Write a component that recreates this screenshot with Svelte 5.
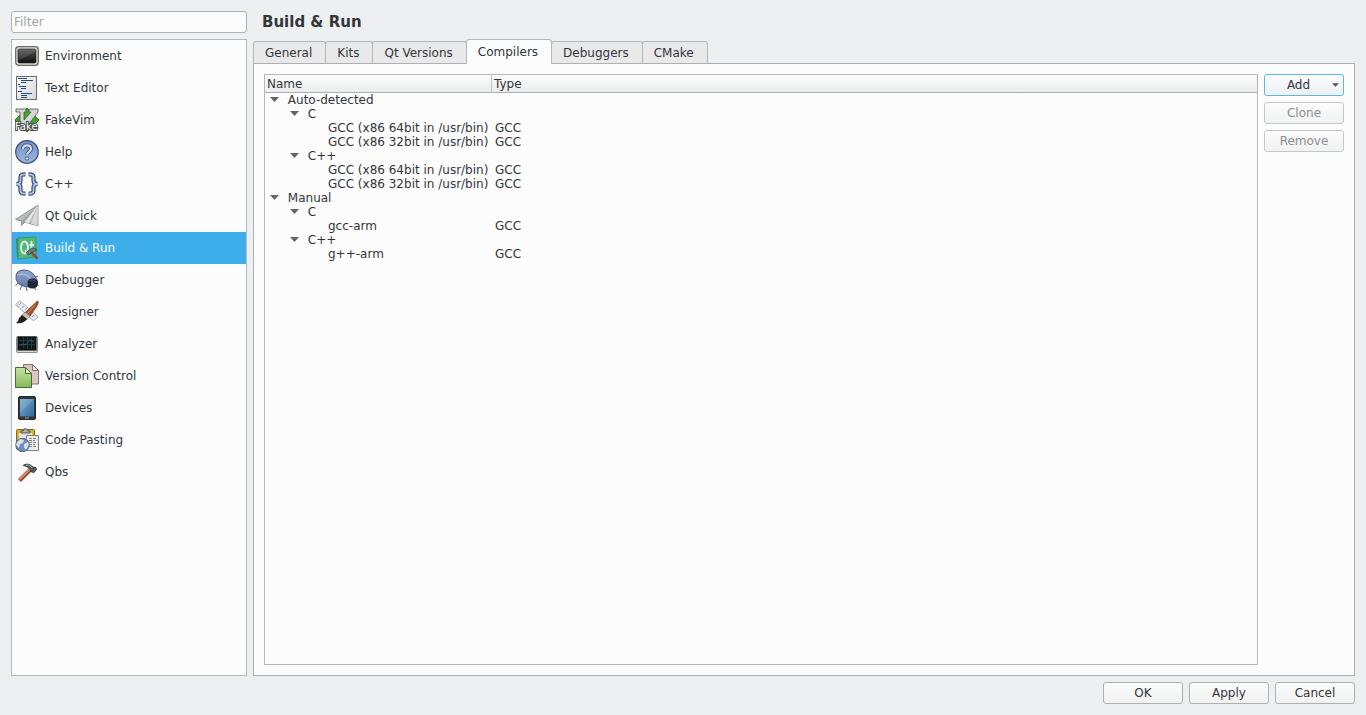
<script>
    const categories = [
        "Environment", "Text Editor", "FakeVim", "Help", "C++", "Qt Quick", "Build & Run",
        "Debugger", "Designer", "Analyzer", "Version Control", "Devices", "Code Pasting", "Qbs"
    ]
    const tabs = ["General", "Kits", "Qt Versions", "Compilers", "Debuggers", "CMake"]
    const rows = [
        { level: 0, name: "Auto-detected" },
        { level: 1, name: "C" },
        { level: 2, name: "GCC (x86 64bit in /usr/bin)", type: "GCC" },
        { level: 2, name: "GCC (x86 32bit in /usr/bin)", type: "GCC" },
        { level: 1, name: "C++" },
        { level: 2, name: "GCC (x86 64bit in /usr/bin)", type: "GCC" },
        { level: 2, name: "GCC (x86 32bit in /usr/bin)", type: "GCC" },
        { level: 0, name: "Manual" },
        { level: 1, name: "C" },
        { level: 2, name: "gcc-arm", type: "GCC" },
        { level: 1, name: "C++" },
        { level: 2, name: "g++-arm", type: "GCC" }
    ]

    let filter = $state ("")
    let category = $state ("Build & Run")
    let tab = $state ("Compilers")
    let closed = $state ([])

    const shown = $derived (categories.filter (c => c.toLowerCase ().includes (filter.toLowerCase ())))

    // a row is visible when none of its parents is closed
    function isVisible (index) {
        let level = rows[index].level
        for (let i = index - 1; i >= 0 && level > 0; i--) {
            if (rows[i].level < level) {
                if (closed.includes (i)) return false
                level = rows[i].level
            }
        }
        return true
    }

    function toggle (index) {
        closed = closed.includes (index) ? closed.filter (i => i !== index) : [...closed, index]
    }
</script>

{#snippet icon(name)}
    <svg class="icon" viewBox="0 0 24 24" aria-hidden="true">
        {#if name === "Environment"}
            <rect x=".7" y="2.7" width="22.6" height="18.6" rx="3" fill="#d8d8d6" stroke="#686b69" stroke-width="1.3" />
            <rect x="3" y="5" width="18" height="14" rx="1.5" fill="url(#screen)" stroke="#222" stroke-width=".6" />
            <path d="M3.5 16Q12 13 20.5 7V5.500H4z" fill="#fff" opacity=".12" />
        {:else if name === "Text Editor"}
            <rect x="1.500" y=".5" width="20" height="23" fill="url(#paper)" stroke="#686b69" />
            <path d="M3 2.500h9M6 4.500h12M6 6.500h5M3 8.500h2M4 10.500h7M6 12.500h5M3 15.500h4M6 17.500h11M6 19.500h6M6 21.500h6" stroke="#24468c" stroke-width="1.200" />
        {:else if name === "FakeVim"}
            <path d="M12 0l12 12-12 12L0 12z" fill="#3eaa22" stroke="#23751b" />
            <path d="M1 1h10v3H9v8l7-8h-2V1h9v3L11 20H5V4H1z" fill="#d6d8d6" stroke="#4b4e4b" stroke-width=".8" />
            <text x="0" y="22" class="fake">Fake</text>
        {:else if name === "Help"}
            <circle cx="12" cy="12" r="11.300" fill="url(#blue)" stroke="#405276" stroke-width="1.2" />
            <path d="M8 9Q8 5.300 12 5.300t4 3.500c0 3-4 3-4 6" fill="none" stroke="#33466f" stroke-width="3.800" />
            <path d="M8 9Q8 5.300 12 5.300t4 3.500c0 3-4 3-4 6" fill="none" stroke="#d3def2" stroke-width="2.200" />
            <circle cx="12" cy="18.500" r="1.700" fill="#d3def2" stroke="#33466f" stroke-width=".8" />
        {:else if name === "C++"}
            <path d="M10.500 2.500Q5.500 2 5.500 5v3.500Q5.500 12 1.500 12q4 0 4 3.500V19q0 3 5 2.500M13.500 2.500q5-.5 5 2.500v3.500q0 3.500 4 3.500-4 0-4 3.500V19q0 3-5 2.500" fill="none" stroke="#2f4877" stroke-width="4.200" />
            <path d="M10.500 2.500Q5.500 2 5.500 5v3.500Q5.500 12 1.500 12q4 0 4 3.500V19q0 3 5 2.500M13.500 2.500q5-.5 5 2.500v3.500q0 3.500 4 3.500-4 0-4 3.500V19q0 3-5 2.500" fill="none" stroke="#b5c5e2" stroke-width="1.800" />
        {:else if name === "Qt Quick"}
            <path d="M23 1L.5 15.500l6 1.500v4.500l3.500-3.500 8 2.500L23 21.500z" fill="#bcbebe" stroke="#7d8080" stroke-width=".8" />
            <path d="M23 1L6.500 17v4.500z" fill="#a2a4a4" />
            <path d="M23 1L10 18l3.500 1.300z" fill="#e7e7e7" />
            <path d="M23 1l-7 19 6.500 1.200z" fill="#d7d9d9" />
        {:else if name === "Build & Run"}
            <path d="M1 3l4-2v20l-3 2z" fill="#338c5e" />
            <path d="M3 2l18-1v20L3 23z" fill="#51b875" stroke="#3a996a" />
            <ellipse cx="9.500" cy="11.500" rx="3.500" ry="6" fill="none" stroke="#dcefe4" stroke-width="2" />
            <path d="M10 14l3 4.500M16.500 5v9q0 2 2 2M14.500 9h4.500" fill="none" stroke="#dcefe4" stroke-width="1.800" />
            <path d="M15.500 15.500l7 7" stroke="#84513a" stroke-width="2.800" />
            <path d="M12 18l-.5-2 5.500-4 4 .5.5 2-4.500 1.500-3 3z" fill="#68777b" stroke="#344448" stroke-width=".7" />
        {:else if name === "Debugger"}
            <path d="M3 15l-2.500 3M7 17l-2 5M11 19l1 4M18 18l3 4M21 15l2.500 3M19 10l4-2" stroke="#606268" fill="none" />
            <path d="M1 11Q0 2 9 2t13 10q1 7-7 7-12 0-14-8z" fill="url(#bug)" stroke="#4c5d7e" />
            <path d="M4 7q7-3 13 5" fill="none" stroke="#b5c3dc" stroke-width="1.300" />
            <path d="M12.500 16q0-6 5.500-5.500t5 5q-.5 5-5.500 5t-5-4.500z" fill="#202634" />
            <path d="M14.500 13q3-2.500 6 .5" fill="none" stroke="#566172" stroke-width=".8" />
        {:else if name === "Designer"}
            <path d="M.7 4.500L5 .8l18 16-4.500 4z" fill="#e6eaf2" stroke="#a6acb8" />
            <path d="M4 5l2-2M7 8l2-2M10 10l2-2M14 14l2-2M17 17l2-2" stroke="#929aaa" />
            <path d="M22.500 1q1.500 0 0 4L15 16l-5-3z" fill="#a45427" stroke="#633013" stroke-width=".8" />
            <path d="M20 5l-8 9" stroke="#dc9560" />
            <path d="M10 12l5 4-3.500 4-5-4z" fill="#c6c2ba" stroke="#695d50" stroke-width=".6" />
            <path d="M7 15l5 4q-3 5-11 4 3-2 3-5z" fill="#211c19" />
        {:else if name === "Analyzer"}
            <rect x="1.500" y="4.500" width="21" height="16" rx="1" fill="#c2c4c4" stroke="#8a8d8d" />
            <rect x="3" y="5" width="18" height="13" fill="#101719" stroke="#111" />
            <path d="M4 8.500h16M4 12.500h16M8.500 5v12M12.500 5v12M16.500 5v12" stroke="#21474e" stroke-width=".8" />
            <path d="M4 14l4-2 3 1 4-5 4 2" fill="none" stroke="#2f6b6e" stroke-width=".7" />
            <path d="M3 19.500h15M20 19.500h1" stroke="#d9dbdb" />
        {:else if name === "Version Control"}
            <path d="M8.500.5h9l6 6V20h-15z" fill="#ddc6c7" stroke="#846f70" />
            <path d="M17.500.5v6h6z" fill="#f0e2e2" stroke="#846f70" />
            <path d="M.5 3.500h10l6 6v14H.5z" fill="url(#green)" stroke="#4b6a32" />
            <path d="M10.500 3.500v6h6z" fill="#dceebd" stroke="#4b6a32" />
        {:else if name === "Devices"}
            <rect x="3.500" y=".5" width="17" height="23" rx="1.500" fill="#303538" stroke="#24292b" />
            <rect x="5" y="3" width="14" height="17.500" fill="url(#tablet)" />
            <path d="M5 3h14L5 17z" fill="#fff" opacity=".13" />
            <path d="M10 22h4" stroke="#aaa" />
        {:else if name === "Code Pasting"}
            <rect x="1.500" y="1.500" width="18" height="20" rx="1" fill="#d6b62d" stroke="#7c6924" />
            <rect x="4" y="5" width="13" height="14" fill="#e9e6d9" />
            <path d="M6 5V3h2q2-5 5 0h2v2z" fill="#b1b1b1" stroke="#555" />
            <path d="M11.500 7.500h12v15h-12z" fill="#ededec" stroke="#7e807d" />
            <path d="M14 10.500h7M14 12.500h6M14 14.500h7M14 16.500h6M14 18.500h7" stroke="#858884" stroke-dasharray="3 1" />
            <circle cx="7.500" cy="17" r="6.700" fill="#6f8fb9" stroke="#46658f" />
            <path d="M2 14l3-3 4 1-1 3-3 1-1 4-3-3zM9 16l4-2 .8 3-3 5-2-3z" fill="#d7e1e9" />
        {:else}
            <path d="M4.500 20.500L15.500 9.500" stroke="#8b4c31" stroke-width="4" />
            <path d="M4.500 19.500L15 9" stroke="#d98a60" stroke-width="2" />
            <path d="M8 5.500Q13 2 18 7l3 .5.500 2-2.500 3-2.500-.5-2-3.500Q11 5.500 8 5.500z" fill="#535c5d" stroke="#2b3435" stroke-width=".8" />
            <path d="M11 5q4-.5 6 3" fill="none" stroke="#adb3b3" />
        {/if}
    </svg>
{/snippet}

<!-- gradients shared by the category icons -->
<svg class="defs" aria-hidden="true">
    <defs>
        <linearGradient id="screen" x2="0" y2="1"><stop stop-color="#555" /><stop offset="1" stop-color="#101010" /></linearGradient>
        <linearGradient id="paper" x2="1" y2="1"><stop stop-color="#fff" /><stop offset="1" stop-color="#d6d6d6" /></linearGradient>
        <linearGradient id="blue" x2="0" y2="1"><stop stop-color="#7390c4" /><stop offset="1" stop-color="#9eb5df" /></linearGradient>
        <linearGradient id="bug" x2="0" y2="1"><stop stop-color="#93a8cf" /><stop offset="1" stop-color="#6079a8" /></linearGradient>
        <linearGradient id="green" x2="0" y2="1"><stop stop-color="#c8e3a0" /><stop offset="1" stop-color="#83ba5c" /></linearGradient>
        <linearGradient id="tablet" x2="1" y2="1"><stop stop-color="#78a9d2" /><stop offset="1" stop-color="#35699b" /></linearGradient>
    </defs>
</svg>

<div class="dialog">
    <aside>
        <input type="text" placeholder="Filter" aria-label="Filter" bind:value={filter} />
        <nav>
            {#each shown as name}
                <button class="category" class:selected={category === name} onclick={() => category = name}>
                    {@render icon (name)}
                    <span>{name}</span>
                </button>
            {/each}
        </nav>
    </aside>

    <main>
        <h1>{category}</h1>
        <div class="tabs" role="tablist">
            {#each tabs as name}
                <button class="tab" role="tab" class:active={tab === name} aria-selected={tab === name} onclick={() => tab = name}>{name}</button>
            {/each}
        </div>
        <div class="panel">
            <div class="tree">
                <table>
                    <thead>
                        <tr><th class="name">Name</th><th>Type</th></tr>
                    </thead>
                    <tbody>
                        {#each rows as row, i}
                            {#if isVisible (i)}
                                <tr>
                                    <td class="level{row.level}">
                                        {#if row.level < 2}
                                            <button class="arrow" class:closed={closed.includes (i)} aria-label="Toggle {row.name}" onclick={() => toggle (i)}>
                                                <svg viewBox="0 0 10 5"><path d="M0 0h9L4.500 5z" fill="#616568" /></svg>
                                            </button>
                                        {/if}
                                        {row.name}
                                    </td>
                                    <td>{row.type ?? ""}</td>
                                </tr>
                            {/if}
                        {/each}
                    </tbody>
                </table>
            </div>
            <div class="actions">
                <button class="push add">
                    <span>Add</span>
                    <svg viewBox="0 0 6 3"><path d="M0 0h6L3 3z" fill="#53575a" /></svg>
                </button>
                <button class="push" disabled>Clone</button>
                <button class="push" disabled>Remove</button>
            </div>
        </div>
    </main>

    <footer>
        <button class="push">OK</button>
        <button class="push">Apply</button>
        <button class="push">Cancel</button>
    </footer>
</div>

<style>
    :global(body) {
        background: #eeeff1;
    }

    .dialog {
        box-sizing: border-box;
        min-height: 100vh;
        padding: 11px;
        display: grid;
        grid-template-columns: 236px 1fr;
        grid-template-rows: 1fr auto;
        gap: 6px;
        font: 12px/14px "DejaVu Sans", sans-serif;
        color: #31363b;
    }

    .defs {
        position: absolute;
        width: 0;
        height: 0;
    }

    button, input {
        box-sizing: border-box;
        margin: 0;
        font: inherit;
        color: inherit;
    }

    aside, main {
        display: flex;
        flex-direction: column;
        min-width: 0;
    }

    aside {
        gap: 6px;
    }

    input {
        height: 22px;
        padding: 0 2px;
        border: 1px solid #adafb0;
        border-radius: 3px;
        background: #fcfcfc;
    }

    input::placeholder {
        color: #a4a6a8;
    }

    nav {
        flex: 1;
        border: 1px solid #b5b6b7;
        background: #fcfcfc;
    }

    .category {
        display: flex;
        align-items: center;
        gap: 6px;
        width: 100%;
        height: 32px;
        padding: 0 3px;
        border: 0;
        background: none;
        text-align: left;
    }

    .category.selected {
        background: #3daee9;
        color: #fcfcfc;
    }

    .icon {
        width: 24px;
        height: 24px;
    }

    .fake {
        font: 10px "DejaVu Sans", sans-serif;
        fill: #fff;
        stroke: #454b45;
        stroke-width: 2px;
        paint-order: stroke;
    }

    h1 {
        margin: 0 0 6px;
        padding-left: 9px;
        font-size: 15px;
        line-height: 22px;
    }

    .tabs {
        display: flex;
        align-items: flex-end;
        height: 24px;
    }

    .tab {
        height: 22px;
        padding: 0 13px 0 11px;
        border: 1px solid #b5b6b7;
        border-bottom: 0;
        border-radius: 3px 3px 0 0;
        background: #e9e9ea;
    }

    .tab + .tab {
        margin-left: -1px;
    }

    .tab.active {
        z-index: 1;
        height: 25px;
        margin-bottom: -1px;
        background: #fcfcfc;
    }

    .panel {
        flex: 1;
        display: flex;
        gap: 6px;
        padding: 10px;
        border: 1px solid #adafb0;
        background: #fcfcfc;
    }

    .tree {
        flex: 1;
        border: 1px solid #b5b6b7;
    }

    table {
        width: 100%;
        table-layout: fixed;
        border-spacing: 0;
    }

    th {
        height: 17px;
        padding: 0 2px;
        border-bottom: 1px solid #adafb0;
        background: linear-gradient(#fcfcfc, #ebecec);
        font-weight: normal;
        text-align: left;
    }

    th.name {
        width: 222px;
        border-right: 1px solid #c4c5c6;
    }

    td {
        height: 14px;
        padding: 0 0 0 3px;
        white-space: nowrap;
    }

    .level0 {
        padding-left: 5px;
    }

    .level1 {
        padding-left: 25px;
    }

    .level2 {
        padding-left: 63px;
    }

    .arrow {
        width: 10px;
        height: 10px;
        margin-right: 4px;
        padding: 0;
        border: 0;
        background: none;
    }

    .arrow svg {
        display: block;
        width: 10px;
        height: 5px;
    }

    .arrow.closed svg {
        transform: rotate(-90deg);
    }

    .actions {
        display: flex;
        flex-direction: column;
        gap: 6px;
    }

    .push {
        width: 80px;
        height: 22px;
        padding: 0;
        border: 1px solid #adafb0;
        border-radius: 3px;
        background: linear-gradient(#fcfcfc, #f0f1f1);
    }

    .push:disabled {
        border-color: #c5c6c7;
        color: #8c8e90;
    }

    .add {
        display: flex;
        align-items: center;
        padding-right: 4px;
        border-color: #5db6e6;
        background: linear-gradient(#fcfcfc, #edf1f5);
    }

    .add span {
        flex: 1;
    }

    .add svg {
        width: 7px;
        height: 4px;
    }

    footer {
        grid-column: 1 / -1;
        display: flex;
        justify-content: flex-end;
        gap: 6px;
    }
</style>
